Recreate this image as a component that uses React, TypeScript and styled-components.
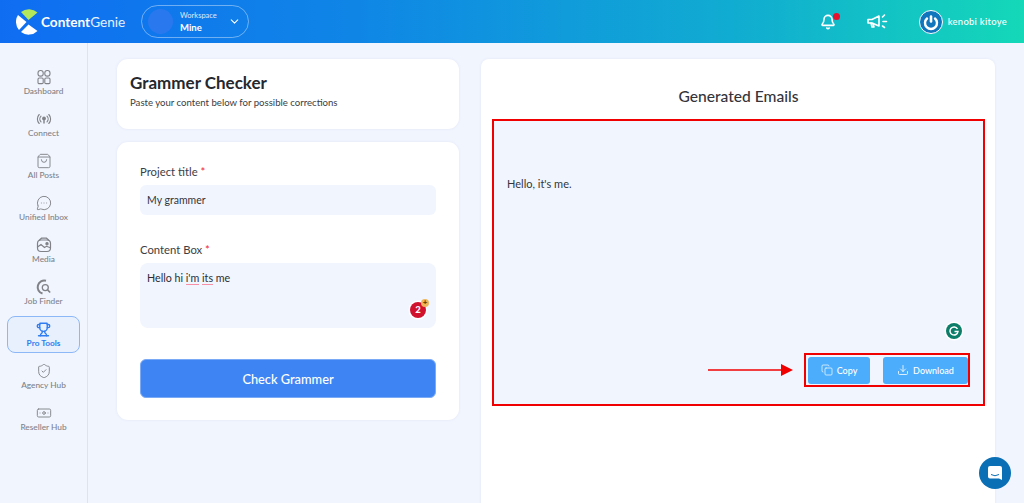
import React from 'react';
import styled, { createGlobalStyle } from 'styled-components';
import { Banknote, Bell, ChevronDown, Copy, Download, MessageCircleMore, ShieldCheck, ShoppingBag, Trophy } from 'lucide-react';

const GlobalStyle = createGlobalStyle`
  html, body { margin: 0; padding: 0; height: 100%; overflow: hidden; }
  body { font-family: "Lato", "Liberation Sans", sans-serif; background: #f1f5fe; color: #2b2d33; }
  * { box-sizing: border-box; }
`;

const Page = styled.div`
  width: 1024px;
  height: 503px;
  position: relative;
  overflow: hidden;
  display: flex;
  flex-direction: column;
`;

const Header = styled.header`
  height: 43px;
  flex: none;
  display: flex;
  align-items: center;
  padding: 0 17px 0 16px;
  background: linear-gradient(90deg, #0f6df2 0%, #0f86e6 35%, #11b0cf 75%, #14d8b8 100%);
  color: #fff;
`;

const Brand = styled.div`
  display: flex;
  align-items: center;
  width: 125px;
`;

const BrandText = styled.span`
  font-size: 13.6px;
  font-weight: 700;
  span { font-weight: 400; opacity: 0.9; }
`;

const Workspace = styled.div`
  width: 108px;
  height: 33px;
  border: 1px solid rgba(255, 255, 255, 0.4);
  border-radius: 17px;
  display: flex;
  align-items: center;
  padding: 0 7px 0 38px;
  position: relative;
  overflow: hidden;
  &::before {
    content: '';
    position: absolute;
    left: 6px;
    top: 3px;
    width: 25px;
    height: 25px;
    border-radius: 50%;
    background: #2a78ee;
  }
`;

const WorkspaceText = styled.div`
  flex: 1;
  line-height: 1;
  padding-top: 1px;
  small { display: block; font-size: 7.5px; opacity: 0.85; margin-bottom: 3px; }
  b { display: block; font-size: 9.5px; font-weight: 700; }
`;

const HeaderRight = styled.div`
  margin-left: auto;
  display: flex;
  align-items: center;
`;

const BellWrap = styled.div`
  position: relative;
  display: flex;
  margin-top: 1px;
  margin-right: 31px;
`;

const Dot = styled.i`
  position: absolute;
  right: -4px;
  top: -1px;
  width: 7px;
  height: 7px;
  border-radius: 50%;
  background: #e8112d;
`;

const Avatar = styled.div`
  width: 24px;
  height: 24px;
  margin-left: 31px;
  margin-right: 5px;
  display: flex;
`;

const UserName = styled.span`
  font-size: 9.4px;
  letter-spacing: 0.3px;
  font-weight: 500;
`;

const Body = styled.div`
  flex: 1;
  display: flex;
  min-height: 0;
`;

const Sidebar = styled.nav`
  width: 88px;
  flex: none;
  border-right: 1px solid #dfe3ee;
  padding: 21px 7px 0;
  display: flex;
  flex-direction: column;
  gap: 5px;
`;

const NavItem = styled.div<{ $active?: boolean }>`
  height: 37px;
  width: 73px;
  display: flex;
  flex-direction: column;
  align-items: center;
  justify-content: center;
  gap: 1px;
  border-radius: 8px;
  border: 1px solid ${p => (p.$active ? '#8db8f7' : 'transparent')};
  background: ${p => (p.$active ? '#e8f0fe' : 'transparent')};
  color: ${p => (p.$active ? '#2f7df0' : '#808288')};
  font-size: 8.3px;
  font-weight: ${p => (p.$active ? 700 : 500)};
  white-space: nowrap;
  line-height: 10px;
  svg { display: block; flex: none; }
`;

const Main = styled.main`
  flex: 1;
  display: flex;
  gap: 22px;
  padding: 16px 29px 0;
  min-width: 0;
`;

const LeftColumn = styled.div`
  width: 342px;
  flex: none;
  display: flex;
  flex-direction: column;
  gap: 13px;
`;

const Card = styled.section`
  background: #fff;
  border-radius: 11px;
  box-shadow: 0 0 3px rgba(40, 70, 130, 0.08);
`;

const IntroCard = styled(Card)`
  height: 70px;
  padding: 14px 13px;
`;

const Title = styled.h1`
  margin: 0 0 4px;
  font-size: 17px;
  line-height: 19px;
  font-weight: 700;
  color: #26282e;
`;

const Subtitle = styled.p`
  margin: 0;
  font-size: 9.6px;
  line-height: 13px;
  color: #3a3c43;
`;

const FormCard = styled(Card)`
  height: 278px;
  padding: 22px 23px;
  display: flex;
  flex-direction: column;
`;

const Label = styled.label`
  font-size: 11.3px;
  line-height: 16px;
  color: #3c3e45;
  margin-bottom: 5px;
  em { color: #ef1c3c; font-style: normal; }
`;

const TitleInput = styled.div`
  height: 30px;
  border-radius: 6px;
  background: #f1f5fe;
  padding: 0 7px;
  display: flex;
  align-items: center;
  font-size: 10.5px;
  color: #33353b;
  margin-bottom: 27px;
`;

const ContentBox = styled.div`
  height: 66px;
  border-radius: 8px;
  background: #f1f5fe;
  padding: 8px 7px;
  font-size: 10.7px;
  line-height: 14px;
  color: #2b2d33;
  position: relative;
  margin-bottom: 31px;
`;

const Squiggle = styled.span`
  border-bottom: 1.5px solid #f78fa7;
`;

const GrammarlyCount = styled.div`
  position: absolute;
  right: 10px;
  bottom: 10px;
  width: 16px;
  height: 16px;
  border-radius: 50%;
  background: #d0122f;
  box-shadow: 0 0 0 1.5px #fff;
  color: #fff;
  font-size: 9.5px;
  font-weight: 900;
  display: flex;
  align-items: center;
  justify-content: center;
  &::after {
    content: '+';
    position: absolute;
    right: -3px;
    top: -3px;
    width: 8px;
    height: 8px;
    line-height: 7px;
    text-align: center;
    border-radius: 50%;
    background: #edb65a;
    color: #5a3a00;
    font-size: 8px;
  }
`;

const CheckButton = styled.button`
  height: 39px;
  border: 1px solid #7aa9f6;
  border-radius: 6px;
  background: #3e85f3;
  color: #fff;
  font: 500 12.8px "Lato", sans-serif;
`;

const ResultCard = styled(Card)`
  flex: 1;
  height: 470px;
  padding: 0 10px 0 11px;
  border-radius: 8px 8px 0 0;
`;

const ResultTitle = styled.h2`
  margin: 0;
  height: 60px;
  padding-top: 28px;
  text-align: center;
  font-size: 15.6px;
  line-height: 19px;
  font-weight: 500;
  color: #33353b;
`;

const EmailBox = styled.div`
  height: 287px;
  border: 2px solid #f00000;
  background: #f1f5fe;
  position: relative;
  display: flex;
  flex-direction: column;
  padding: 56px 13px 0;
`;

const EmailText = styled.p`
  margin: 0;
  font-size: 11px;
  line-height: 14px;
  color: #33353b;
`;

const ActionRow = styled.div`
  margin-top: auto;
  margin-bottom: 17px;
  display: flex;
  align-items: center;
  justify-content: flex-end;
`;

const Arrow = styled.svg`
  margin-right: 11px;
  flex: none;
`;

const ActionFrame = styled.div`
  height: 34px;
  padding: 1.5px 0 1.5px 2px;
  border: 2px solid #f00000;
  display: flex;
  gap: 13px;
  background: #f1f5fe;
`;

const ActionButton = styled.button<{ $w: number }>`
  width: ${p => p.$w}px;
  height: 27px;
  padding: 0;
  border: none;
  border-radius: 3px;
  background: #4badfb;
  color: #fff;
  font: 500 9px "Lato", sans-serif;
  display: flex;
  align-items: center;
  justify-content: center;
  gap: 4px;
`;

const GrammarlyDone = styled.div`
  position: absolute;
  right: 21px;
  bottom: 65px;
  width: 16px;
  height: 16px;
  border-radius: 50%;
  background: #0b7d68;
  box-shadow: 0 0 0 1.5px #fff;
  display: flex;
  align-items: center;
  justify-content: center;
`;

const ChatBubble = styled.div`
  position: absolute;
  right: 13px;
  bottom: 14px;
  width: 32px;
  height: 32px;
  border-radius: 50%;
  background: #0b6fb5;
  display: flex;
  align-items: center;
  justify-content: center;
`;

// round mark split by an X, the right wedge is left open
const Logo = () => (
  <svg width="25" height="26" viewBox="0 0 25 26">
    <path d="M12.5 11 L5 3 A12.5 12.5 0 0 1 21.5 3.5 Z" fill="#b4e85a" />
    <path d="M10.5 13 L2 6 A12.5 12.5 0 0 0 3 21 Z" fill="#fff" />
    <path d="M12.5 15.5 L21.5 22 A12.5 12.5 0 0 1 5 23 Z" fill="#fff" />
  </svg>
);

const Megaphone = () => (
  <svg width="21" height="18" viewBox="0 0 21 18" fill="none" stroke="#fff" strokeWidth="1.6" strokeLinecap="round" strokeLinejoin="round">
    <path d="M1 6.5h4l7-3.5v10l-7-3H1z" />
    <path d="M4 10l1 4h2l-1-3.5" />
    <path d="M15.5 4l2-2M16 8.5h3.5M15.5 13l2 1.5" />
  </svg>
);

const PowerAvatar = () => (
  <svg width="24" height="24" viewBox="0 0 24 24" fill="none">
    <circle cx="12" cy="12" r="11.5" fill="#0f75bc" stroke="#fff" />
    <path d="M12 6.5v5" stroke="#fff" strokeWidth="2.6" strokeLinecap="round" />
    <path d="M8 8.5a6 6 0 1 0 8 0" stroke="#fff" strokeWidth="2.4" strokeLinecap="round" />
  </svg>
);

const GridIcon = () => (
  <svg width="16" height="16" viewBox="0 0 16 16" fill="none" stroke="currentColor" strokeWidth="1.1">
    <rect x="2" y="1.5" width="5.2" height="5.6" rx="2.4" />
    <rect x="8.8" y="1.5" width="5.2" height="5.6" rx="2.4" />
    <rect x="2" y="9" width="5.2" height="5.6" rx="1.2" />
    <rect x="8.8" y="9" width="5.2" height="5.6" rx="1.2" />
  </svg>
);

const ConnectIcon = () => (
  <svg width="16" height="16" viewBox="0 0 16 16" fill="none" stroke="currentColor" strokeWidth="1.1" strokeLinecap="round">
    <path d="M3.2 3.5a6.5 6.5 0 0 0 0 9M12.8 3.5a6.5 6.5 0 0 1 0 9" />
    <path d="M5 5.2a4 4 0 0 0 0 5.6M11 5.2a4 4 0 0 1 0 5.6" />
    <circle cx="8" cy="7.4" r="1.9" fill="currentColor" stroke="none" />
    <path d="M8 9v3" strokeWidth="1.4" />
  </svg>
);

const MediaIcon = () => (
  <svg width="16" height="16" viewBox="0 0 16 16" fill="none" stroke="currentColor" strokeWidth="1.2">
    <rect x="1.5" y="3" width="13" height="11.5" rx="3.5" />
    <path d="M3 3.5L5.5 1.2h5L13 3.5" />
    <path d="M1.5 10l3.5-2.5 3.5 3 2-1.2 4 1.4" />
    <circle cx="11" cy="6.7" r="1.1" fill="currentColor" />
  </svg>
);

const JobIcon = () => (
  <svg width="16" height="16" viewBox="0 0 16 16" fill="none" stroke="currentColor">
    <path d="M10 1.8A6.5 6.5 0 1 0 6.5 14.5" strokeWidth="2" />
    <circle cx="9.3" cy="8.6" r="3" strokeWidth="1.3" />
    <path d="M11.6 10.9l2.6 2.6" strokeWidth="1.6" />
  </svg>
);

const navItems: { label: string; icon: React.ReactNode; active?: boolean }[] = [
  { label: 'Dashboard', icon: <GridIcon /> },
  { label: 'Connect', icon: <ConnectIcon /> },
  { label: 'All Posts', icon: <ShoppingBag size={16} strokeWidth={1.4} /> },
  { label: 'Unified Inbox', icon: <MessageCircleMore size={16} strokeWidth={1.4} /> },
  { label: 'Media', icon: <MediaIcon /> },
  { label: 'Job Finder', icon: <JobIcon /> },
  { label: 'Pro Tools', icon: <Trophy size={15} strokeWidth={2.2} />, active: true },
  { label: 'Agency Hub', icon: <ShieldCheck size={16} strokeWidth={1.4} /> },
  { label: 'Reseller Hub', icon: <Banknote size={16} strokeWidth={1.4} /> },
];

export default function App() {
  return (
    <Page>
      <GlobalStyle />
      <Header>
        <Brand>
          <Logo />
          <BrandText>Content<span>Genie</span></BrandText>
        </Brand>
        <Workspace>
          <WorkspaceText>
            <small>Workspace</small>
            <b>Mine</b>
          </WorkspaceText>
          <ChevronDown size={13} strokeWidth={2} />
        </Workspace>
        <HeaderRight>
          <BellWrap>
            <Bell size={16} strokeWidth={2.4} />
            <Dot />
          </BellWrap>
          <Megaphone />
          <Avatar><PowerAvatar /></Avatar>
          <UserName>kenobi kitoye</UserName>
        </HeaderRight>
      </Header>
      <Body>
        <Sidebar>
          {navItems.map(item => (
            <NavItem key={item.label} $active={item.active}>
              {item.icon}
              {item.label}
            </NavItem>
          ))}
        </Sidebar>
        <Main>
          <LeftColumn>
            <IntroCard>
              <Title>Grammer Checker</Title>
              <Subtitle>Paste your content below for possible corrections</Subtitle>
            </IntroCard>
            <FormCard>
              <Label>Project title <em>*</em></Label>
              <TitleInput>My grammer</TitleInput>
              <Label>Content Box <em>*</em></Label>
              <ContentBox>
                Hello hi <Squiggle>i'm</Squiggle> <Squiggle>its</Squiggle> me
                <GrammarlyCount>2</GrammarlyCount>
              </ContentBox>
              <CheckButton>Check Grammer</CheckButton>
            </FormCard>
          </LeftColumn>
          <ResultCard>
            <ResultTitle>Generated Emails</ResultTitle>
            <EmailBox>
              <EmailText>Hello, it's me.</EmailText>
              <GrammarlyDone>
                <svg width="10" height="10" viewBox="0 0 10 10" fill="none" stroke="#fff" strokeWidth="1.5">
                  <path d="M8.5 3A4 4 0 1 0 9 5.5H5.5" />
                </svg>
              </GrammarlyDone>
              <ActionRow>
                <Arrow width="85" height="14" viewBox="0 0 85 14">
                  <path d="M0 7h74" stroke="#f00000" strokeWidth="1.7" />
                  <path d="M73 1l12 6-12 6z" fill="#f00000" />
                </Arrow>
                <ActionFrame>
                  <ActionButton $w={62}><Copy size={12} strokeWidth={1.4} />Copy</ActionButton>
                  <ActionButton $w={85}><Download size={12} strokeWidth={1.6} />Download</ActionButton>
                </ActionFrame>
              </ActionRow>
            </EmailBox>
          </ResultCard>
        </Main>
      </Body>
      <ChatBubble>
        <svg width="16" height="16" viewBox="0 0 16 16">
          <path d="M3 1h10a2 2 0 0 1 2 2v12l-3-1.5H3a2 2 0 0 1-2-2V3a2 2 0 0 1 2-2z" fill="#fff" />
          <path d="M4 9.5q4 2.5 8 0" stroke="#0b6fb5" fill="none" strokeWidth="1" />
        </svg>
      </ChatBubble>
    </Page>
  );
}
